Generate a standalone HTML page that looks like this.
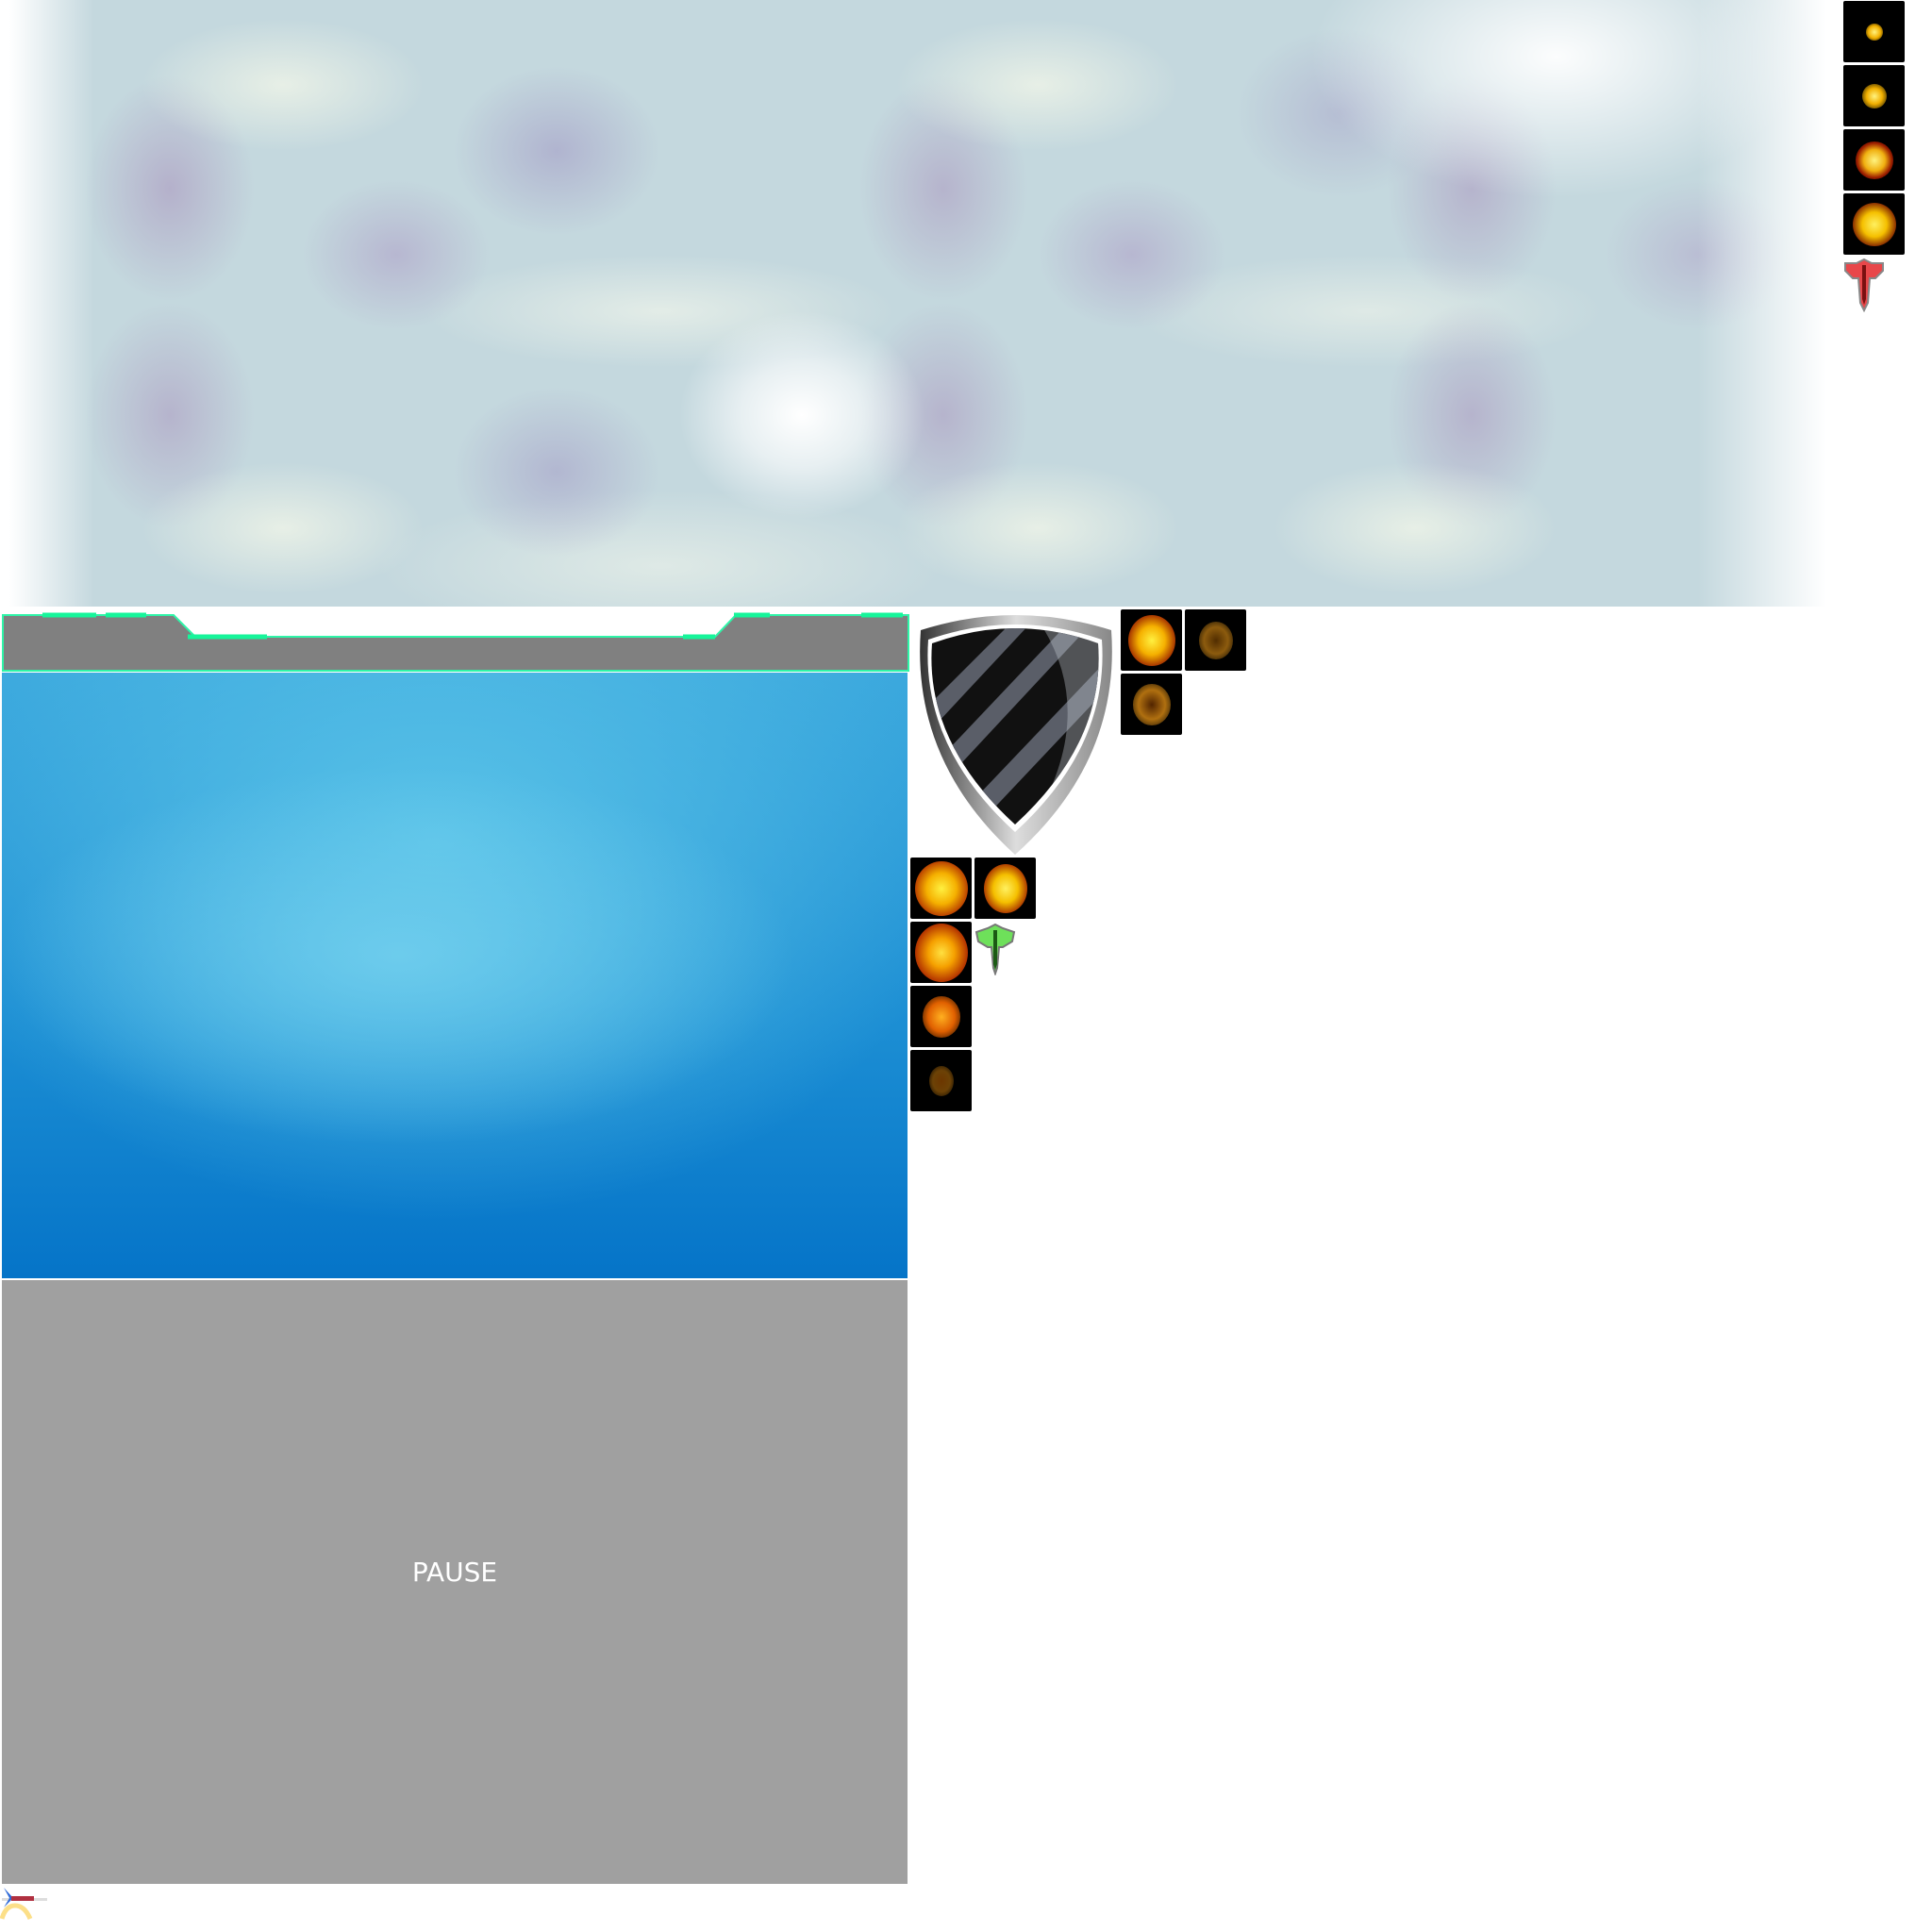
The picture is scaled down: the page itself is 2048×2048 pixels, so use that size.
<!DOCTYPE html>
<html><head><meta charset="utf-8"><style>
html,body{margin:0;padding:0;background:#fff;width:2048px;height:2048px;overflow:hidden;position:relative;font-family:"DejaVu Sans","Liberation Sans",sans-serif}
.a{position:absolute}
#sky{left:0;top:0;width:1960px;height:643px;
background:
radial-gradient(ellipse 130px 110px at 850px 440px,rgba(255,255,255,1),rgba(255,255,255,0.6) 50%,rgba(255,255,255,0) 100%),
radial-gradient(ellipse 260px 150px at 1650px 60px,rgba(255,255,255,0.95),rgba(255,255,255,0)),
radial-gradient(ellipse 150px 70px at 300px 90px,rgba(240,245,232,0.8),rgba(240,245,232,0)),
radial-gradient(ellipse 150px 70px at 1100px 90px,rgba(240,245,232,0.8),rgba(240,245,232,0)),
radial-gradient(ellipse 150px 70px at 300px 560px,rgba(240,245,232,0.8),rgba(240,245,232,0)),
radial-gradient(ellipse 150px 70px at 1100px 560px,rgba(240,245,232,0.8),rgba(240,245,232,0)),
radial-gradient(ellipse 150px 70px at 1500px 560px,rgba(240,245,232,0.8),rgba(240,245,232,0)),
radial-gradient(ellipse 90px 120px at 180px 200px,rgba(170,150,190,0.6),rgba(170,150,190,0)),
radial-gradient(ellipse 110px 90px at 590px 160px,rgba(160,150,195,0.55),rgba(160,150,195,0)),
radial-gradient(ellipse 90px 120px at 1000px 200px,rgba(170,150,190,0.55),rgba(170,150,190,0)),
radial-gradient(ellipse 90px 120px at 1560px 200px,rgba(170,150,190,0.55),rgba(170,150,190,0)),
radial-gradient(ellipse 100px 80px at 420px 270px,rgba(170,150,195,0.5),rgba(170,150,195,0)),
radial-gradient(ellipse 100px 80px at 1200px 270px,rgba(170,150,195,0.5),rgba(170,150,195,0)),
radial-gradient(ellipse 100px 80px at 1800px 270px,rgba(170,150,195,0.4),rgba(170,150,195,0)),
radial-gradient(ellipse 90px 120px at 180px 440px,rgba(170,150,190,0.55),rgba(170,150,190,0)),
radial-gradient(ellipse 90px 120px at 1000px 440px,rgba(170,150,190,0.55),rgba(170,150,190,0)),
radial-gradient(ellipse 90px 120px at 1560px 440px,rgba(170,150,190,0.55),rgba(170,150,190,0)),
radial-gradient(ellipse 110px 90px at 590px 500px,rgba(160,150,195,0.5),rgba(160,150,195,0)),
radial-gradient(ellipse 110px 90px at 1420px 120px,rgba(160,150,195,0.4),rgba(160,150,195,0)),
radial-gradient(ellipse 250px 60px at 700px 330px,rgba(240,245,235,0.7),rgba(240,245,235,0)),
radial-gradient(ellipse 250px 60px at 1450px 330px,rgba(240,245,235,0.6),rgba(240,245,235,0)),
radial-gradient(ellipse 300px 80px at 700px 600px,rgba(240,245,235,0.6),rgba(240,245,235,0)),
#c4d8de;}
#fadeL{left:0;top:0;width:100px;height:643px;background:linear-gradient(90deg,#fff 10%,rgba(255,255,255,0))}
#fadeR{left:1800px;top:0;width:160px;height:643px;background:linear-gradient(90deg,rgba(255,255,255,0),#fff 85%)}
.bx{background:#000;width:65px;height:65px;border-radius:2px;position:absolute;overflow:hidden}
.bx i{position:absolute;border-radius:50%;left:50%;top:50%;transform:translate(-50%,-50%)}
#blue{left:2px;top:713px;width:960px;height:642px;
background:
radial-gradient(ellipse 420px 200px at 420px 300px,rgba(115,208,238,0.85),rgba(115,208,238,0)),
radial-gradient(ellipse 700px 500px at 460px 180px,#5ac3e8,rgba(90,195,232,0) 80%),
linear-gradient(180deg,#3ba8dd 0%,#1b8dd3 60%,#0574c8 100%);}
#pause{left:2px;top:1357px;width:960px;height:640px;background:#a0a0a0}
#pt{left:2px;top:1650px;width:960px;text-align:center;color:#fff;font-size:28px;line-height:34px}
</style></head><body>
<div id="sky" class="a"></div><div id="fadeL" class="a"></div><div id="fadeR" class="a"></div>

<div class="bx" style="left:1954px;top:1px"><i style="width:18px;height:18px;background:radial-gradient(#fff380,#f2b000 50%,rgba(200,80,0,0) 100%)"></i></div>
<div class="bx" style="left:1954px;top:69px"><i style="width:26px;height:26px;background:radial-gradient(#fff380,#f2b000 45%,rgba(200,80,0,0) 100%)"></i></div>
<div class="bx" style="left:1954px;top:137px"><i style="width:40px;height:40px;background:radial-gradient(#fff380,#f0b010 40%,rgba(220,40,0,0.7) 65%,rgba(200,40,0,0) 100%)"></i></div>
<div class="bx" style="left:1954px;top:205px"><i style="width:46px;height:46px;background:radial-gradient(#fff060,#f5c000 40%,rgba(200,70,0,0.7) 70%,rgba(150,40,0,0) 100%)"></i></div>
<svg class="a" style="left:1954px;top:273px" width="44" height="58" viewBox="0 0 44 58"><path d="M22 2 L30 6 L42 6 L42 14 L34 22 L28 22 L26 48 L22 56 L18 48 L16 22 L10 22 L2 14 L2 6 L14 6 Z" fill="#e8474a" stroke="#888" stroke-width="2"/><path d="M20 8 L24 8 L24 44 L22 50 L20 44 Z" fill="#7a1010"/></svg>

<div id="gbar" class="a" style="left:0;top:648px;width:966px;height:66px">
<svg width="966" height="66" viewBox="0 0 966 66"><path d="M3 4 L184 4 L207 27 L758 27 L780 4 L963 4 L963 63 L3 63 Z" fill="#808080" stroke="#2ef5a8" stroke-width="2"/>
<g stroke="#16f59a" stroke-width="5"><line x1="45" y1="4" x2="102" y2="4"/><line x1="112" y1="4" x2="155" y2="4"/><line x1="199" y1="27" x2="283" y2="27"/><line x1="724" y1="27" x2="758" y2="27"/><line x1="778" y1="4" x2="816" y2="4"/><line x1="913" y1="4" x2="957" y2="4"/></g></svg></div>

<div id="blue" class="a"></div>
<div id="pause" class="a"></div>
<div id="pt" class="a">PAUSE</div>

<svg class="a" style="left:966px;top:646px" width="222" height="262" viewBox="0 0 222 262">
<defs><linearGradient id="rim" x1="0" y1="0" x2="1" y2="0"><stop offset="0" stop-color="#333"/><stop offset="0.5" stop-color="#ddd"/><stop offset="1" stop-color="#888"/></linearGradient>
<clipPath id="in"><path d="M22 36 Q110 4 198 36 Q206 140 110 228 Q14 140 22 36 Z"/></clipPath></defs>
<path d="M10 22 Q110 -10 212 22 Q222 160 110 260 Q0 160 10 22 Z" fill="url(#rim)"/>
<path d="M18 32 Q110 0 202 32 Q210 145 110 236 Q10 145 18 32 Z" fill="#fff"/>
<path d="M22 36 Q110 4 198 36 Q206 140 110 228 Q14 140 22 36 Z" fill="#111"/>
<g clip-path="url(#in)" fill="#5a5e68"><path d="M0 120 L120 0 L140 0 L0 150Z"/><path d="M0 190 L180 0 L205 0 L0 220Z"/><path d="M30 240 L230 30 L230 60 L60 240Z"/><path d="M100 240 L230 110 L230 140 L130 240Z"/><path d="M140 20 Q200 120 120 240 L230 240 L230 0Z" fill="rgba(200,205,215,0.35)"/></g>
</svg>

<div class="bx" style="left:1188px;top:646px"><i style="width:50px;height:54px;background:radial-gradient(#fff040,#f5b000 40%,rgba(210,70,0,0.8) 70%,rgba(120,30,0,0) 100%)"></i></div>
<div class="bx" style="left:1256px;top:646px"><i style="width:36px;height:40px;background:radial-gradient(rgba(90,50,0,0.9),rgba(200,130,20,0.7) 50%,rgba(120,60,0,0) 100%)"></i></div>
<div class="bx" style="left:1188px;top:714px"><i style="width:40px;height:44px;background:radial-gradient(rgba(90,40,0,0.9),rgba(220,140,20,0.8) 50%,rgba(120,60,0,0) 100%)"></i></div>

<div class="bx" style="left:965px;top:909px"><i style="width:56px;height:58px;background:radial-gradient(#fff040,#f5b000 40%,rgba(220,80,0,0.85) 70%,rgba(120,30,0,0) 100%)"></i></div>
<div class="bx" style="left:1033px;top:909px"><i style="width:46px;height:52px;background:radial-gradient(#fff060,#f5c000 40%,rgba(220,80,0,0.8) 70%,rgba(120,30,0,0) 100%)"></i></div>
<div class="bx" style="left:965px;top:977px"><i style="width:56px;height:62px;background:radial-gradient(#ffe040,#f5a000 35%,rgba(210,60,0,0.85) 70%,rgba(120,30,0,0) 100%)"></i></div>
<div class="bx" style="left:965px;top:1045px"><i style="width:40px;height:44px;background:radial-gradient(#ffb020,#e06000 50%,rgba(120,30,0,0) 100%)"></i></div>
<div class="bx" style="left:965px;top:1113px"><i style="width:26px;height:32px;background:radial-gradient(rgba(120,60,0,0.9),rgba(180,110,10,0.6) 50%,rgba(100,50,0,0) 100%)"></i></div>
<svg class="a" style="left:1033px;top:978px" width="44" height="56" viewBox="0 0 44 56"><path d="M22 2 L30 6 L42 10 L40 20 L30 26 L26 26 L24 48 L22 54 L20 48 L18 26 L14 26 L4 20 L2 10 L14 6 Z" fill="#6ee05a" stroke="#777" stroke-width="2"/><path d="M20 8 L24 8 L24 44 L22 50 L20 44 Z" fill="#1b5a14"/></svg>

<svg class="a" style="left:0;top:1998px" width="60" height="40" viewBox="0 0 60 40"><path d="M2 14 L50 14 L50 17 L2 17 Z" fill="#ddd"/><path d="M4 3 L10 14 L4 24 L14 14Z" fill="#2f6ad8"/><rect x="12" y="12" width="24" height="5" fill="#b03040"/><path d="M2 36 Q6 22 16 22 Q26 22 32 36" fill="none" stroke="#fbd76a" stroke-width="5" opacity="0.8"/></svg>
</body></html>
